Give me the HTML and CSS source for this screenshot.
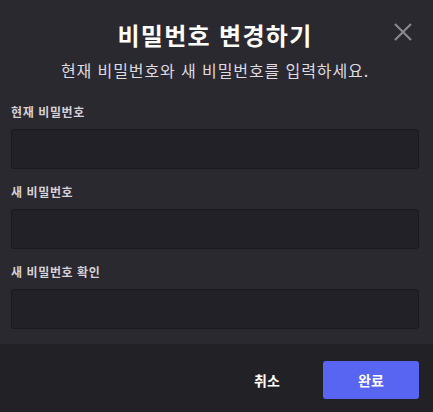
FILE: index.html
```html
<!DOCTYPE html>
<html lang="ko">
<head>
<meta charset="utf-8">
<title>비밀번호 변경하기</title>
<link rel="stylesheet" href="styles.css">
</head>
<body>
<div class="modal">
  <div class="body">
    <div class="header">
      <h1 class="title">비밀번호 변경하기</h1>
      <p class="subtitle">현재 비밀번호와 새 비밀번호를 입력하세요.</p>
      <button class="close" aria-label="닫기">
        <svg width="24" height="24" viewBox="0 0 24 24"><path d="M4 4 L20 20 M20 4 L4 20" stroke="currentColor" stroke-width="2" fill="none"/></svg>
      </button>
    </div>
    <div class="fields">
      <div class="field">
        <label class="label">현재 비밀번호</label>
        <input class="input" type="password">
      </div>
      <div class="field">
        <label class="label">새 비밀번호</label>
        <input class="input" type="password">
      </div>
      <div class="field">
        <label class="label">새 비밀번호 확인</label>
        <input class="input" type="password">
      </div>
    </div>
  </div>
  <div class="footer">
    <button class="btn btn-link">취소</button>
    <button class="btn btn-primary">완료</button>
  </div>
</div>
</body>
</html>
```

FILE: styles.css
```css
* { box-sizing: border-box; }
html, body {
  margin: 0;
  padding: 0;
  height: 100%;
}
body {
  background: #2a292f;
  font-family: "Noto Sans CJK KR", "Noto Sans", sans-serif;
  color: #dbdee1;
}
.modal {
  display: flex;
  flex-direction: column;
  height: 412px;
}
.body {
  flex: 1;
  background: #2a292f;
  padding: 0 14px 15px 11px;
}
.header {
  position: relative;
  padding-top: 20px;
  text-align: center;
}
.title {
  margin: 0;
  font-size: 24px;
  line-height: 30px;
  font-weight: 700;
  letter-spacing: 1.3px;
  color: #ffffff;
}
.subtitle {
  margin: 10px 0 0;
  font-size: 16px;
  line-height: 20px;
  letter-spacing: 0.9px;
  color: #dedbe2;
}
.close {
  position: absolute;
  top: 20px;
  right: 4px;
  width: 24px;
  height: 24px;
  padding: 0;
  border: 0;
  background: none;
  color: #8d8a93;
}
.close svg { display: block; }
.fields {
  display: flex;
  flex-direction: column;
  gap: 15px;
  margin-top: 24px;
}
.field {
  display: flex;
  flex-direction: column;
}
.label {
  font-size: 12px;
  line-height: 16px;
  font-weight: 700;
  letter-spacing: 0.6px;
  color: #d7d2da;
  margin-bottom: 9px;
}
.input {
  height: 40px;
  width: 100%;
  background: #222127;
  border: 1px solid #1a191e;
  border-radius: 3px;
  color: #dbdee1;
  font: inherit;
  padding: 0 10px;
  outline: none;
}
.footer {
  height: 68px;
  background: #222126;
  display: flex;
  justify-content: flex-end;
  align-items: flex-start;
  padding: 17px 14px 0 16px;
  gap: 8px;
}
.btn {
  height: 38px;
  min-width: 96px;
  padding: 2px 16px;
  border: 0;
  border-radius: 3px;
  font-family: inherit;
  font-size: 14px;
  font-weight: 700;
  color: #ffffff;
  background: none;
}
.btn-primary {
  background: #5865f2;
}
```
